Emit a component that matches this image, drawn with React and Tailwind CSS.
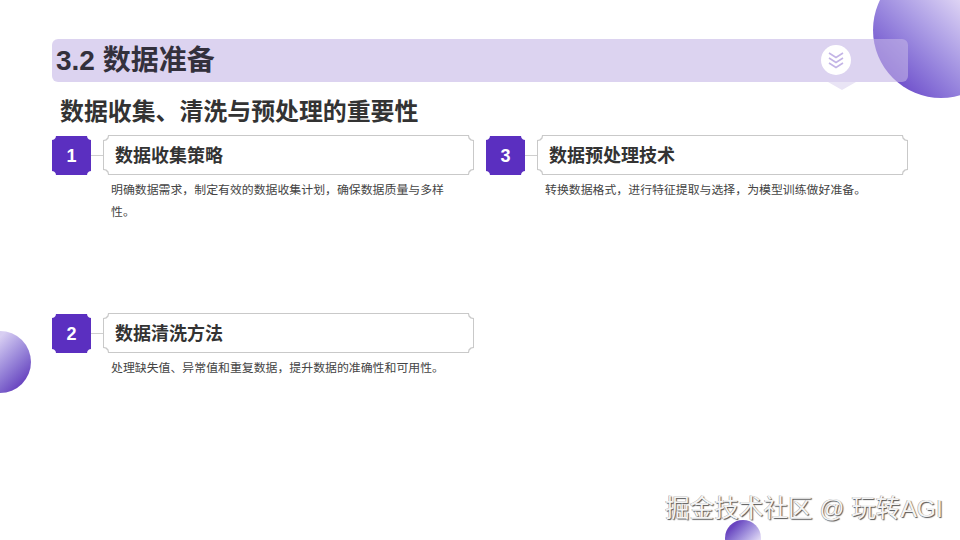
const font = { fontFamily: '"Liberation Sans", "Noto Sans CJK SC", sans-serif' };

function Item({ n, title, desc }) {
  return (
    <div className="flex flex-col">
      <div className="flex items-end h-[40px]">
        <div className="w-[39px] h-[39px] shrink-0 pt-px flex items-center justify-center bg-[#5b2fc0] text-white font-bold text-[18px] [clip-path:polygon(4px_0,35px_0,35.5px_2px,37px_3.5px,39px_4px,39px_35px,37px_35.5px,35.5px_37px,35px_39px,4px_39px,3.5px_37px,2px_35.5px,0_35px,0_4px,2px_3.5px,3.5px_2px)]">
          {n}
        </div>
        <div className="w-3 h-px bg-[#cfcfcf] shrink-0 self-center" />
        <div className="flex-1 h-[40px] p-px bg-[#c9c9c9] [clip-path:polygon(5px_0,calc(100%-5px)_0,calc(100%-4.5px)_2.5px,calc(100%-2.5px)_4.5px,100%_5px,100%_calc(100%-5px),calc(100%-2.5px)_calc(100%-4.5px),calc(100%-4.5px)_calc(100%-2.5px),calc(100%-5px)_100%,5px_100%,4.5px_calc(100%-2.5px),2.5px_calc(100%-4.5px),0_calc(100%-5px),0_5px,2.5px_4.5px,4.5px_2.5px)]">
          <div className="w-full h-full bg-white flex items-center pl-[11px] pt-[2px] text-[18px] font-bold text-[#333333] [clip-path:polygon(5px_0,calc(100%-5px)_0,calc(100%-4.5px)_2.5px,calc(100%-2.5px)_4.5px,100%_5px,100%_calc(100%-5px),calc(100%-2.5px)_calc(100%-4.5px),calc(100%-4.5px)_calc(100%-2.5px),calc(100%-5px)_100%,5px_100%,4.5px_calc(100%-2.5px),2.5px_calc(100%-4.5px),0_calc(100%-5px),0_5px,2.5px_4.5px,4.5px_2.5px)]">
            {title}
          </div>
        </div>
      </div>
      <p className="ml-[59px] mt-[5px] w-[340px] text-[11.9px] leading-[21.5px] text-[#444444]">{desc}</p>
    </div>
  );
}

export default function App() {
  return (
    <div className="relative w-[960px] h-[540px] overflow-hidden bg-white" style={font}>
      <div className="absolute left-[873px] top-[-38px] w-[136px] h-[136px] rounded-full bg-gradient-to-tr from-[#6a45c8] from-[10%] to-[#e2d8f5] to-[70%]" />
      <div className="absolute left-[-31px] top-[331px] w-[62px] h-[62px] rounded-full bg-gradient-to-br from-[#d8cef2] from-[30%] to-[#6a45c0] to-[85%]" />
      <div className="absolute left-[725px] top-[520px] w-[36px] h-[36px] rounded-full bg-gradient-to-br from-[#6a45c0] from-[20%] to-[#e0d8f4] to-[75%]" />

      <div className="relative flex flex-col pt-[39px] px-[52px]">
        <div className="relative h-[43px] rounded-[6px] bg-[rgba(195,180,230,0.59)] flex items-center pl-[4px] text-[28px] font-bold text-[#33303c]">
          <span>3.2 数据准备</span>
          <div className="absolute left-[769px] top-[6px] w-[30px] h-[30px] rounded-full bg-white flex items-center justify-center">
            <svg width="16" height="18" viewBox="0 0 16 18" fill="none" stroke="#c3b4e6" strokeWidth="1.6">
              <path d="M1 2l7 4.5L15 2" />
              <path d="M1 7l7 4.5L15 7" />
              <path d="M1 12l7 4.5L15 12" />
            </svg>
          </div>
          <div className="absolute left-[776px] top-[43px] w-[28px] h-[8px] bg-[#e9e4f5] [clip-path:polygon(0_0,100%_0,50%_100%)]" />
        </div>

        <h2 className="mt-[13px] ml-[8px] h-[34px] leading-[34px] text-[23.9px] font-bold text-[#333333]">数据收集、清洗与预处理的重要性</h2>

        <div className="mt-[6px] grid grid-cols-2 gap-x-3 grid-rows-[178px_178px]">
          <Item n="1" title="数据收集策略" desc="明确数据需求，制定有效的数据收集计划，确保数据质量与多样性。" />
          <Item n="3" title="数据预处理技术" desc="转换数据格式，进行特征提取与选择，为模型训练做好准备。" />
          <Item n="2" title="数据清洗方法" desc="处理缺失值、异常值和重复数据，提升数据的准确性和可用性。" />
        </div>
      </div>

      <div className="absolute left-[665px] top-[492px] text-[24.6px] leading-[34px] whitespace-nowrap text-[#f4f4f4] [text-shadow:1px_1px_1px_#555,-0.5px_-0.5px_0.5px_#999]">
        掘金技术社区 @ 玩转AGI
      </div>
    </div>
  );
}
